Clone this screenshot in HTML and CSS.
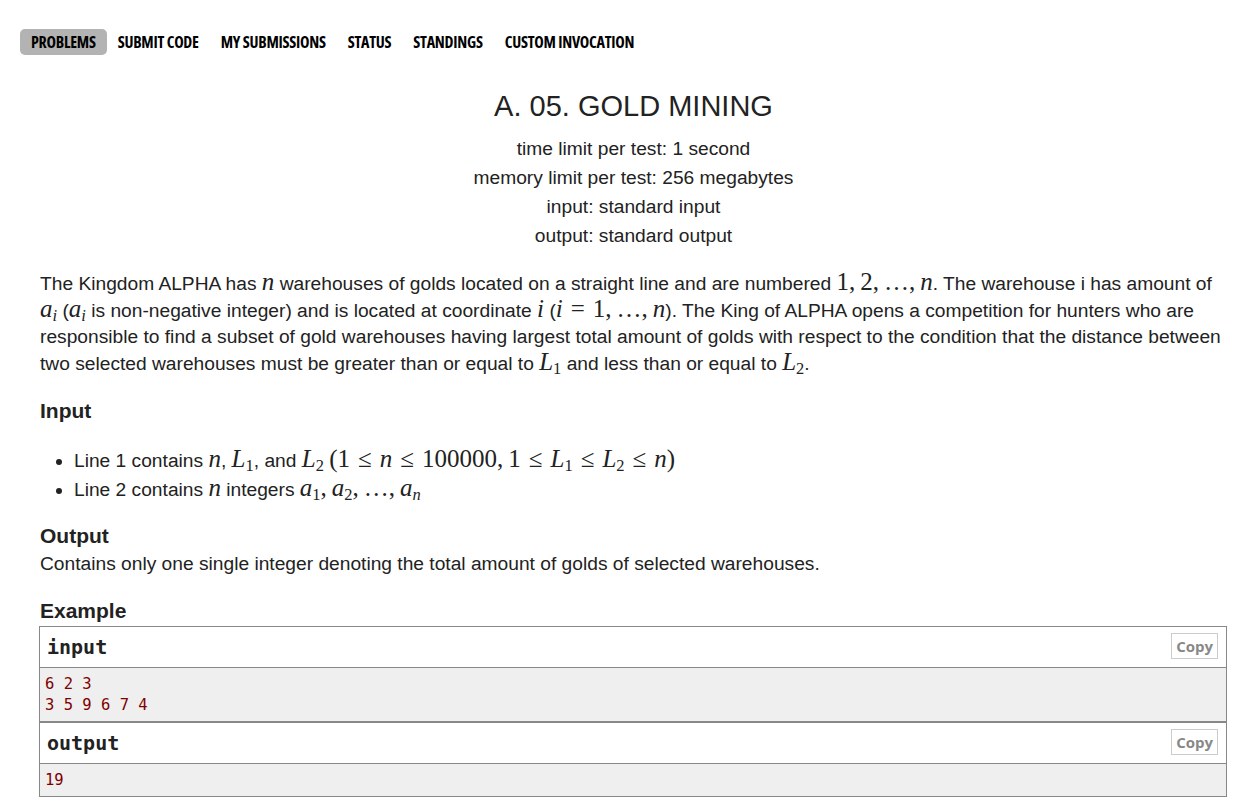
FILE: index.html
```html
<!DOCTYPE html>
<html>
<head>
<meta charset="utf-8">
<link rel="stylesheet" href="styles.css">
</head>
<body>
<nav class="menu">
  <a class="tab active">PROBLEMS</a>
  <a class="tab">SUBMIT CODE</a>
  <a class="tab">MY SUBMISSIONS</a>
  <a class="tab">STATUS</a>
  <a class="tab">STANDINGS</a>
  <a class="tab">CUSTOM INVOCATION</a>
</nav>
<main class="problem">
  <div class="header">
    <div class="title">A. 05. GOLD MINING</div>
    <div class="limit">time limit per test: 1 second</div>
    <div class="limit">memory limit per test: 256 megabytes</div>
    <div class="limit">input: standard input</div>
    <div class="limit">output: standard output</div>
  </div>
  <p class="legend">The Kingdom ALPHA has <span class="m"><i>n</i></span> warehouses of golds located on a straight line and are numbered <span class="m">1,<span class="sp"></span>2,<span class="sp"></span>…,<span class="sp"></span><i>n</i></span>. The warehouse i has amount of <span class="m"><i>a</i><sub><i>i</i></sub></span> (<span class="m"><i>a</i><sub><i>i</i></sub></span> is non-negative integer) and is located at coordinate <span class="m"><i>i</i></span> (<span class="m"><i>i</i><span class="rel">=</span>1,<span class="sp"></span>…,<span class="sp"></span><i>n</i></span>). The King of ALPHA opens a competition for hunters who are responsible to find a subset of gold warehouses having largest total amount of golds with respect to the condition that the distance between two selected warehouses must be greater than or equal to <span class="m"><i>L</i><sub>1</sub></span> and less than or equal to <span class="m"><i>L</i><sub>2</sub></span>.</p>

  <div class="section-title input-title">Input</div>
  <ul class="spec">
    <li>Line 1 contains <span class="m"><i>n</i></span>, <span class="m"><i>L</i><sub>1</sub></span>, and <span class="m"><i>L</i><sub>2</sub></span> <span class="m">(1<span class="rel">≤</span><i>n</i><span class="rel">≤</span>100000,<span class="sp"></span>1<span class="rel">≤</span><i>L</i><sub>1</sub><span class="rel">≤</span><i>L</i><sub>2</sub><span class="rel">≤</span><i>n</i>)</span></li>
    <li>Line 2 contains <span class="m"><i>n</i></span> integers <span class="m"><i>a</i><sub>1</sub>,<span class="sp"></span><i>a</i><sub>2</sub>,<span class="sp"></span>…,<span class="sp"></span><i>a</i><sub><i>n</i></sub></span></li>
  </ul>

  <div class="section-title out-title">Output</div>
  <p class="out-text">Contains only one single integer denoting the total amount of golds of selected warehouses.</p>

  <div class="section-title example-title">Example</div>
  <div class="sample">
    <div class="sample-head"><span>input</span><button class="copy">Copy</button></div>
    <pre class="sample-body">6 2 3
3 5 9 6 7 4</pre>
    <div class="sample-head second"><span>output</span><button class="copy">Copy</button></div>
    <pre class="sample-body">19</pre>
  </div>
</main>
</body>
</html>
```
FILE: styles.css
```css
body {
  margin: 0;
  background: #fff;
  color: #222;
  font-family: "Liberation Sans", Arial, sans-serif;
}

.menu {
  display: flex;
  padding: 29px 0 0 20px;
}

.tab {
  font-family: "Open Sans", "Liberation Sans", sans-serif;
  font-stretch: 75%;
  font-weight: 700;
  font-size: 16px;
  letter-spacing: -0.25px;
  line-height: 16px;
  padding: 5px 11px 5px 11px;
  border-radius: 5px;
  color: #000;
  text-decoration: none;
}

.tab.active {
  background: #b3b3b3;
}

.problem {
  padding: 0 20px 0 40px;
}

.header {
  text-align: center;
  color: #222;
}

.title {
  font-size: 29px;
  line-height: 32px;
  margin-top: 35px;
  margin-bottom: 12px;
}

.limit {
  font-size: 19.2px;
  line-height: 29px;
}

.legend {
  font-size: 19.2px;
  line-height: 26.5px;
  margin: 21px 0 0 0;
}

.m {
  font-family: "Liberation Serif", "Times New Roman", serif;
  font-size: 25px;
  line-height: 0;
  white-space: nowrap;
}

.m i {
  font-style: italic;
}

.m sub {
  font-size: 16.5px;
  vertical-align: -4px;
  line-height: 0;
}

.sp {
  display: inline-block;
  width: 5px;
}

.rel {
  margin: 0 8px;
}

.section-title {
  font-weight: bold;
  font-size: 21px;
  line-height: 26px;
}

.input-title {
  margin-top: 21px;
}

.spec {
  margin: 22px 0 0 0;
  padding-left: 34px;
  font-size: 19.2px;
  line-height: 29px;
}

.out-title {
  margin-top: 19px;
}

.out-text {
  font-size: 19.2px;
  line-height: 26px;
  margin: 2px 0 0 0;
}

.example-title {
  margin-top: 21px;
}

.sample {
  margin: 2px 0 0 -1px;
  border: 1px solid #888;
}

.sample-head {
  display: flex;
  justify-content: space-between;
  align-items: center;
  height: 40px;
  padding: 0 8px 0 7px;
  border-bottom: 1px solid #888;
  font-family: "DejaVu Sans Mono", "Liberation Mono", monospace;
  font-weight: bold;
  font-size: 20px;
  color: #222;
}

.sample-head.second {
  border-top: 2px solid #888;
}

.copy {
  font-family: "Open Sans", "Liberation Sans", sans-serif;
  font-weight: bold;
  font-size: 15px;
  color: #888;
  background: #fff;
  border: 1px solid #ccc;
  padding: 0 4px;
  height: 26px;
  line-height: 22px;
  margin-top: -3px;
}

.sample-body {
  margin: 0;
  padding: 6px 5px 5px 5px;
  background: #efefef;
  color: #800000;
  font-family: "DejaVu Sans Mono", "Liberation Mono", monospace;
  font-size: 15.5px;
  line-height: 21px;
}
```
